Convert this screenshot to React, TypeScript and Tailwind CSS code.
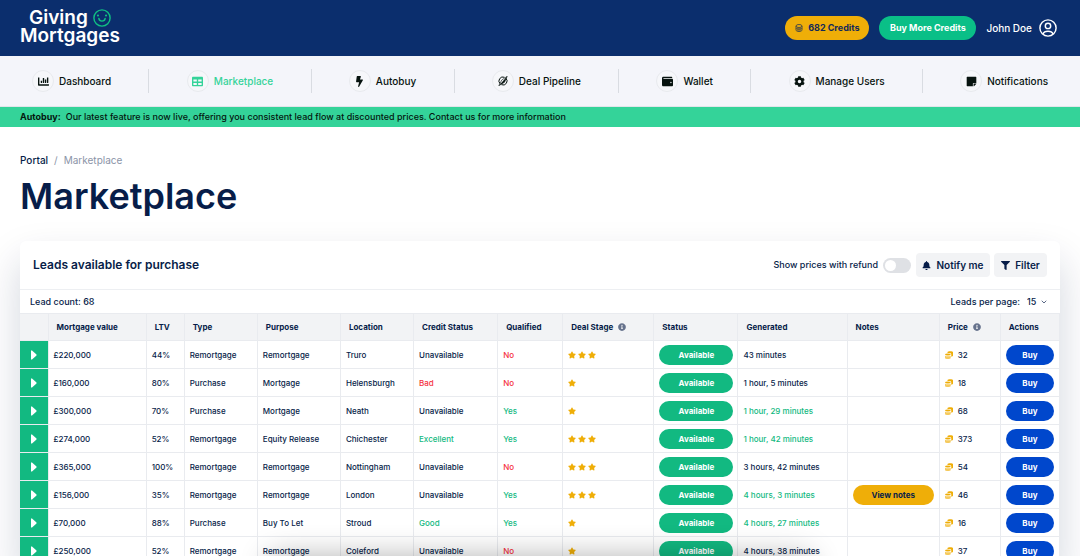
import type { ReactNode } from 'react';
import {
  FaBolt,
  FaBell,
  FaChartBar,
  FaCog,
  FaFilter,
  FaInfoCircle,
  FaStar,
  FaStickyNote,
  FaTable,
  FaWallet,
} from 'react-icons/fa';
import { ChevronDown } from 'lucide-react';

interface Lead {
  value: string;
  ltv: string;
  type: string;
  purpose: string;
  location: string;
  credit: string;
  qualified: string;
  stars: number;
  generated: string;
  fresh?: boolean;
  notes?: boolean;
  price: number;
}

const leads: Lead[] = [
  { value: '£220,000', ltv: '44%', type: 'Remortgage', purpose: 'Remortgage', location: 'Truro', credit: 'Unavailable', qualified: 'No', stars: 3, generated: '43 minutes', price: 32 },
  { value: '£160,000', ltv: '80%', type: 'Purchase', purpose: 'Mortgage', location: 'Helensburgh', credit: 'Bad', qualified: 'No', stars: 1, generated: '1 hour, 5 minutes', price: 18 },
  { value: '£300,000', ltv: '70%', type: 'Purchase', purpose: 'Mortgage', location: 'Neath', credit: 'Unavailable', qualified: 'Yes', stars: 1, generated: '1 hour, 29 minutes', fresh: true, price: 68 },
  { value: '£274,000', ltv: '52%', type: 'Remortgage', purpose: 'Equity Release', location: 'Chichester', credit: 'Excellent', qualified: 'Yes', stars: 3, generated: '1 hour, 42 minutes', fresh: true, price: 373 },
  { value: '£365,000', ltv: '100%', type: 'Remortgage', purpose: 'Remortgage', location: 'Nottingham', credit: 'Unavailable', qualified: 'No', stars: 3, generated: '3 hours, 42 minutes', price: 54 },
  { value: '£156,000', ltv: '35%', type: 'Remortgage', purpose: 'Remortgage', location: 'London', credit: 'Unavailable', qualified: 'Yes', stars: 3, generated: '4 hours, 3 minutes', fresh: true, notes: true, price: 46 },
  { value: '£70,000', ltv: '88%', type: 'Purchase', purpose: 'Buy To Let', location: 'Stroud', credit: 'Good', qualified: 'Yes', stars: 1, generated: '4 hours, 27 minutes', fresh: true, price: 16 },
  { value: '£250,000', ltv: '52%', type: 'Remortgage', purpose: 'Remortgage', location: 'Coleford', credit: 'Unavailable', qualified: 'No', stars: 1, generated: '4 hours, 38 minutes', price: 37 },
];

const columns = [
  { label: '', width: 'w-[28px]' },
  { label: 'Mortgage value', width: 'w-[98px]' },
  { label: 'LTV', width: 'w-[38px]' },
  { label: 'Type', width: 'w-[73px]' },
  { label: 'Purpose', width: 'w-[83px]' },
  { label: 'Location', width: 'w-[73px]' },
  { label: 'Credit Status', width: 'w-[84px]' },
  { label: 'Qualified', width: 'w-[65px]' },
  { label: 'Deal Stage', width: 'w-[91px]', info: true },
  { label: 'Status', width: 'w-[84px]' },
  { label: 'Generated', width: 'w-[109px]' },
  { label: 'Notes', width: 'w-[92px]' },
  { label: 'Price', width: 'w-[61px]', info: true },
  { label: 'Actions', width: 'w-[59px]' },
];

const textColor: Record<string, string> = {
  Bad: 'text-[#f5333f]',
  No: 'text-[#f5333f]',
  Yes: 'text-[#12b981]',
  Good: 'text-[#12b981]',
  Excellent: 'text-[#12b981]',
};

function PipelineIcon() {
  return (
    <svg viewBox="0 0 20 20" className="size-[10px]" fill="none" stroke="currentColor" strokeWidth="2">
      <path d="M13 2.600A8 8 0 0 0 4 15.400M7 17.400A8 8 0 0 0 16 4.600" />
      <path d="M18.500 0.500L13 12.500 1.500 19.500 7.500 8Z" strokeWidth="1.2" />
      <path d="M18.500 0.500L13 12.500 1.500 19.500Z" fill="currentColor" stroke="none" />
    </svg>
  );
}

// Two stacked coins, the front one lighter
function CoinsIcon() {
  return (
    <svg viewBox="0 0 16 16" className="size-[8px] text-[#efae08]" fill="currentColor">
      <path d="M5 2.500C5 0 16 0 16 2.500V9c0 1.200-1.500 2-3.500 2.300V6.500C12.500 4.500 9 4 5 4.200Z" />
      <ellipse cx="5.700" cy="7" rx="5.700" ry="2" />
      <path d="M0 9.500c2 1.500 9.400 1.500 11.400 0V14c0 2.600-11.400 2.600-11.400 0Z" opacity="0.65" />
    </svg>
  );
}

function NavItem({ icon, label, active, last }: { icon: ReactNode; label: string; active?: boolean; last?: boolean }) {
  return (
    <li className={last ? 'flex items-center' : 'flex flex-auto items-center'}>
      <a href="#" className={`flex items-center gap-[5px] ${active ? 'text-[#34d399]' : 'text-[#07130f]'}`}>
        <span className="flex size-[22px] items-center justify-center rounded-full border border-[#e8eaee] bg-[#f6f7fa]">{icon}</span>
        {label}
      </a>
      {!last && <span className="mx-auto h-[24px] w-px bg-[#d9dce2]" />}
    </li>
  );
}

function Header() {
  return (
    <header className="flex h-[56px] items-center justify-between bg-[#0b2e6d] pr-[23px] pl-[20px]">
      <a href="#" className="flex flex-col items-center pb-[2px] text-[19px] leading-[18px] font-semibold text-white">
        <span className="flex items-center gap-[5px]">
          Giving
          <svg viewBox="0 0 20 20" className="size-[18px] text-[#10bf83]" fill="none" stroke="currentColor" strokeWidth="1.6" strokeLinecap="round">
            <circle cx="10" cy="10" r="9" />
            <path d="M6.500 10.500c.5 4 6.500 4 7 0" />
            <path d="M5.400 7.200h.2M14.400 7.200h.2" strokeWidth="2.2" />
          </svg>
        </span>
        <span>Mortgages</span>
      </a>
      <div className="flex items-center text-[9px] font-bold">
        <button className="flex h-[24px] w-[84px] items-center justify-center gap-[5px] rounded-full bg-[#efae08] text-[#12295a]">
          <svg viewBox="0 0 16 16" className="size-[8px] opacity-70" fill="none" stroke="currentColor" strokeWidth="2">
            <ellipse cx="8" cy="4" rx="6" ry="3" />
            <path d="M2 4v8c0 4 12 4 12 0V4M2 8c0 3 12 3 12 0M6 7v7M10 7v7" />
          </svg>
          682 Credits
        </button>
        <button className="ml-[10px] h-[24px] w-[97px] rounded-full bg-[#0abf87] text-white">Buy More Credits</button>
        <a href="#" className="ml-[10px] flex items-center gap-[7px] text-[10px] font-medium text-white">
          John Doe
          <svg viewBox="0 0 20 20" className="size-[18px]" fill="none" stroke="currentColor" strokeWidth="1.6">
            <circle cx="10" cy="10" r="9" />
            <circle cx="10" cy="7.7" r="3" />
            <path d="M4.5 16.8c1.4-4.2 9.6-4.2 11 0" />
          </svg>
        </a>
      </div>
    </header>
  );
}

export default function App() {
  return (
    <div className="h-screen overflow-hidden bg-white font-[Inter,sans-serif] text-[#071d49]">
      <Header />

      <nav className="border-b border-[#e2e5ea] bg-[#f4f5fa] text-[10px] font-medium">
        <ul className="flex h-[50px] items-center px-[32px]">
          <NavItem icon={<FaChartBar size={11} />} label="Dashboard" />
          <NavItem icon={<FaTable size={11} />} label="Marketplace" active />
          <NavItem icon={<FaBolt size={11} />} label="Autobuy" />
          <NavItem icon={<PipelineIcon />} label="Deal Pipeline" />
          <NavItem icon={<FaWallet size={11} />} label="Wallet" />
          <NavItem icon={<FaCog size={11} />} label="Manage Users" />
          <NavItem icon={<FaStickyNote size={11} />} label="Notifications" last />
        </ul>
      </nav>

      <p className="h-[20px] bg-[#34d399] px-[20px] text-[9px] leading-[20px] font-medium text-[#04160f]">
        <strong className="mr-[5px] font-bold">Autobuy:</strong>
        Our latest feature is now live, offering you consistent lead flow at discounted prices. Contact us for more information
      </p>

      <main className="px-[20px] pt-[25px]">
        <div className="flex gap-[6px] text-[10px] leading-[16px]">
          <a href="#" className="font-medium">Portal</a>
          <span className="text-[#8b94a7]">/</span>
          <span className="text-[#8b94a7]">Marketplace</span>
        </div>
        <h1 className="mt-[4px] text-[36px] leading-[48px] font-semibold">Marketplace</h1>

        {/* Leads card */}
        <section className="mt-[21px] rounded-[6px] bg-white shadow-[0_20px_40px_rgba(7,29,73,0.18)]">
          <div className="flex h-[49px] items-center justify-between border-b border-[#edeff2] px-[13px]">
            <h2 className="text-[12px] font-semibold">Leads available for purchase</h2>
            <div className="flex items-center text-[10px]">
              <label htmlFor="refund" className="text-[9px] font-medium">Show prices with refund</label>
              <input
                id="refund"
                type="checkbox"
                className="mr-[5px] ml-[5px] h-[15px] w-[28px] appearance-none rounded-full bg-[#dfe1e5] before:m-[2px] before:block before:size-[11px] before:rounded-full before:bg-white checked:bg-[#12b981]"
              />
              <button className="flex h-[24px] w-[74px] items-center justify-center gap-[5px] rounded-[4px] bg-[#f2f3f5] font-semibold">
                <FaBell size={9} />
                Notify me
              </button>
              <button className="ml-[4px] flex h-[24px] w-[53px] items-center justify-center gap-[5px] rounded-[4px] bg-[#f2f3f5] font-semibold">
                <FaFilter size={9} />
                Filter
              </button>
            </div>
          </div>

          <div className="flex h-[23px] items-center justify-between pr-[12px] pl-[10px] text-[9px] font-medium">
            <span>Lead count: 68</span>
            <div className="flex items-center">
              <label htmlFor="per-page">Leads per page:</label>
              <select id="per-page" className="ml-[7px] w-[13px] appearance-none bg-transparent">
                <option>15</option>
                <option>30</option>
              </select>
              <ChevronDown size={8} />
            </div>
          </div>

          <table className="w-full table-fixed border-collapse text-left text-[8px]">
            <thead>
              <tr className="h-[27px] bg-[#f2f3f5]">
                {columns.map((col) => (
                  <th key={col.label} className={`${col.width} border border-l-0 border-[#e9ebef] pl-[8px] font-bold whitespace-nowrap`}>
                    <span className="flex items-center gap-[5px]">
                      {col.label}
                      {col.info && <FaInfoCircle size={8} className="text-[#66728c]" />}
                    </span>
                  </th>
                ))}
              </tr>
            </thead>
            <tbody className="[&_td]:border-r [&_td]:border-b [&_td]:border-[#e9ebef] [&_td]:pl-[5px] [&_td]:font-medium [&_td]:whitespace-nowrap">
              {leads.map((lead) => (
                <tr key={lead.value} className="h-[28px]">
                  <td className="bg-[#12b981] !p-0">
                    <button aria-label="Expand lead" className="flex h-[27px] w-full items-center justify-center text-white">
                      <svg viewBox="0 0 6 10" className="h-[10px] w-[6px]" fill="currentColor">
                        <path d="M0 0.5V9.500L1 9.500L5.500 5.500V4.500L1 0.500Z" />
                      </svg>
                    </button>
                  </td>
                  <td>{lead.value}</td>
                  <td>{lead.ltv}</td>
                  <td>{lead.type}</td>
                  <td>{lead.purpose}</td>
                  <td>{lead.location}</td>
                  <td className={textColor[lead.credit]}>{lead.credit}</td>
                  <td className={textColor[lead.qualified]}>{lead.qualified}</td>
                  <td>
                    <span className="flex gap-[2px] text-[#efae08]">
                      {Array.from({ length: lead.stars }, (_, i) => (
                        <FaStar key={i} size={8} />
                      ))}
                    </span>
                  </td>
                  <td className="pr-[4px]">
                    <button className="h-[20px] w-full rounded-full bg-[#12b981] font-bold text-white">Available</button>
                  </td>
                  <td className={lead.fresh ? 'text-[#12b981]' : ''}>{lead.generated}</td>
                  <td className="pr-[5px]">
                    {lead.notes && <button className="h-[20px] w-full rounded-full bg-[#efae08] font-bold">View notes</button>}
                  </td>
                  <td>
                    <span className="flex items-center gap-[5px]">
                      <CoinsIcon />
                      {lead.price}
                    </span>
                  </td>
                  <td className="pr-[5px]">
                    <button className="h-[20px] w-full rounded-full bg-[#0047cc] font-bold text-white">Buy</button>
                  </td>
                </tr>
              ))}
            </tbody>
          </table>
        </section>
      </main>

      {/* Shade along the bottom of the window */}
      <div aria-hidden="true" className="pointer-events-none fixed inset-x-1/4 top-full h-[40px] shadow-[0_0_30px_rgba(0,0,0,0.3)]" />
    </div>
  );
}
